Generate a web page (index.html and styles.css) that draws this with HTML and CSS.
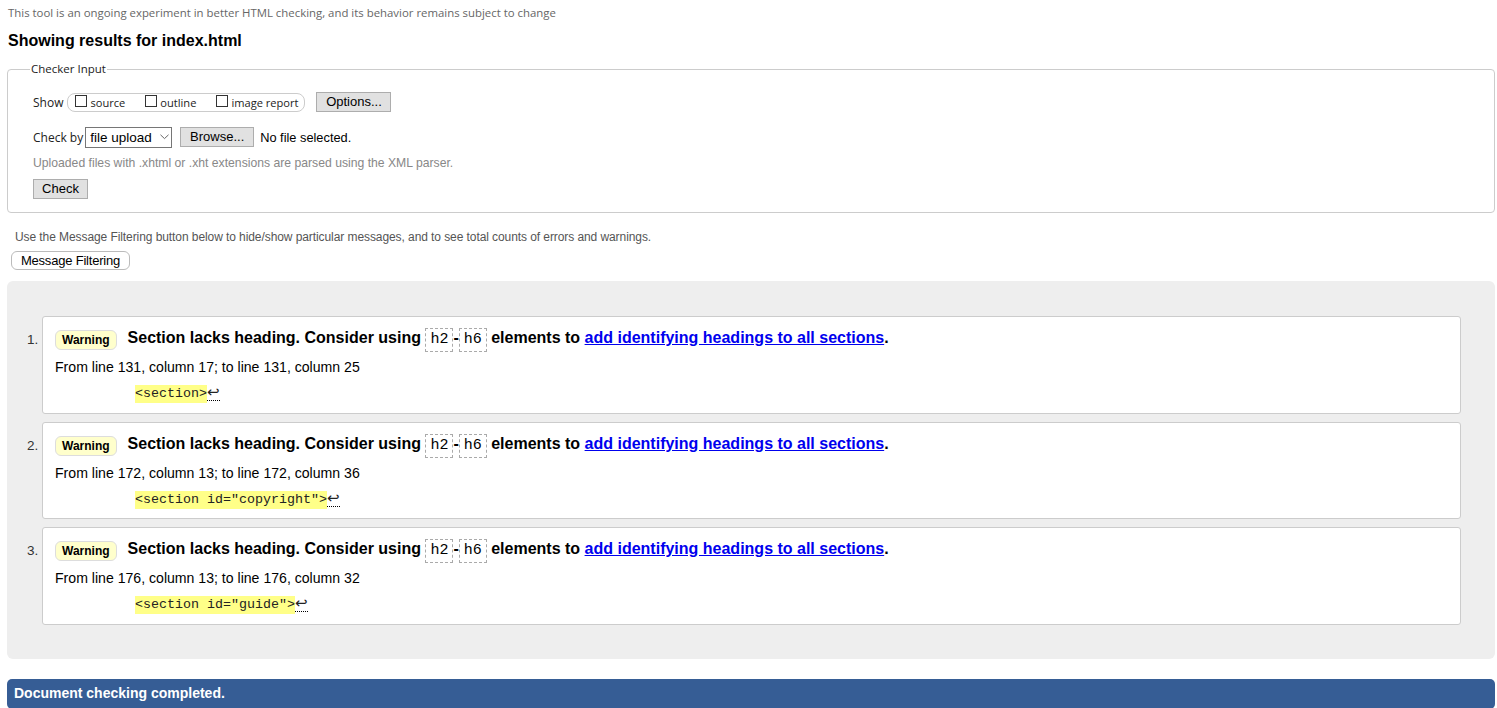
FILE: index.html
```html
<!DOCTYPE html>
<html lang="en">
<head>
<meta charset="utf-8">
<title>Showing results for index.html</title>
<link rel="stylesheet" href="styles.css">
</head>
<body>
<p class="disclaimer">This tool is an ongoing experiment in better HTML checking, and its behavior remains subject to change</p>
<h2 class="results-title">Showing results for index.html</h2>
<form class="checker-form">
  <fieldset class="checker">
    <legend>Checker Input</legend>
    <div class="row">
      <span class="label">Show</span>
      <span class="show-box">
        <label class="opt"><span class="cb"></span>source</label>
        <label class="opt"><span class="cb"></span>outline</label>
        <label class="opt"><span class="cb"></span>image report</label>
      </span>
      <button type="button" class="btn btn-options">Options...</button>
    </div>
    <div class="row row-check">
      <span class="label">Check by</span>
      <span class="select">file upload<svg class="chev" width="9" height="6" viewBox="0 0 9 6"><path d="M0.5 0.8 L4.5 4.6 L8.5 0.8" fill="none" stroke="#666" stroke-width="1"/></svg></span>
      <button type="button" class="btn btn-browse">Browse...</button>
      <span class="nofile">No file selected.</span>
    </div>
    <p class="hint">Uploaded files with .xhtml or .xht extensions are parsed using the XML parser.</p>
    <button type="button" class="btn btn-check">Check</button>
  </fieldset>
</form>
<p class="filter-note">Use the Message Filtering button below to hide/show particular messages, and to see total counts of errors and warnings.</p>
<button type="button" class="filter-btn">Message Filtering</button>
<div class="results">
  <ol class="messages">
    <li class="msg">
      <p class="msg-title"><span class="badge">Warning</span><span class="msg-text">Section lacks heading. Consider using <code class="tag">h2</code>-<code class="tag">h6</code> elements to <a href="#">add identifying headings to all sections</a>.</span></p>
      <p class="location">From line 131, column 17; to line 131, column 25</p>
      <p class="extract"><code><b class="hl">&lt;section&gt;</b><span class="lf">↩</span></code></p>
    </li>
    <li class="msg msg-short">
      <p class="msg-title"><span class="badge">Warning</span><span class="msg-text">Section lacks heading. Consider using <code class="tag">h2</code>-<code class="tag">h6</code> elements to <a href="#">add identifying headings to all sections</a>.</span></p>
      <p class="location">From line 172, column 13; to line 172, column 36</p>
      <p class="extract"><code><b class="hl">&lt;section id="copyright"&gt;</b><span class="lf">↩</span></code></p>
    </li>
    <li class="msg">
      <p class="msg-title"><span class="badge">Warning</span><span class="msg-text">Section lacks heading. Consider using <code class="tag">h2</code>-<code class="tag">h6</code> elements to <a href="#">add identifying headings to all sections</a>.</span></p>
      <p class="location">From line 176, column 13; to line 176, column 32</p>
      <p class="extract"><code><b class="hl">&lt;section id="guide"&gt;</b><span class="lf">↩</span></code></p>
    </li>
  </ol>
</div>
<p class="completed">Document checking completed.</p>
</body>
</html>
```

FILE: styles.css
```css
html, body {
  margin: 0;
  padding: 0;
  background: #fff;
}
body {
  padding: 0 2px 0 7px;
  font-family: "Liberation Sans", Arial, sans-serif;
  color: #000;
  overflow: hidden;
}
.disclaimer {
  margin: 0;
  padding: 5px 0 0 1px;
  font-family: "Open Sans", "Noto Sans", sans-serif;
  font-size: 11.4px;
  line-height: 15px;
  color: #666;
}
.results-title {
  margin: 0;
  padding: 11px 0 0 1px;
  font-size: 16px;
  line-height: 19px;
  font-weight: bold;
}
.checker-form {
  margin: 0;
  padding-top: 12px;
}
.checker {
  margin: 0;
  padding: 16px 25px 13px 25px;
  border: 1px solid #ccc;
  border-radius: 4px;
  min-width: 0;
}
.checker legend {
  padding: 0 1px;
  margin-left: -3px;
  font-family: "Open Sans", "Noto Sans", sans-serif;
  font-size: 11.5px;
  line-height: 14px;
  color: #222;
}
.row {
  display: flex;
  align-items: center;
  height: 20px;
  font-size: 12px;
}
.row-check {
  margin-top: 15px;
}
.label {
  font-family: "Open Sans", "Noto Sans", sans-serif;
  font-size: 12px;
  color: #222;
  margin-right: 2px;
}
.label-show {
  margin-right: 3px;
}
.show-box {
  display: inline-flex;
  align-items: center;
  box-sizing: border-box;
  height: 19px;
  margin-left: 2px;
  padding: 0 6px 0 7px;
  border: 1px solid #ccc;
  border-radius: 8px;
}
.opt {
  display: inline-flex;
  align-items: center;
  font-family: "Open Sans", "Noto Sans", sans-serif;
  font-size: 11.1px;
  color: #222;
}
.opt + .opt {
  margin-left: 20px;
}
.cb {
  display: inline-block;
  width: 10px;
  height: 10px;
  border: 1px solid #333;
  margin-right: 3px;
  margin-top: -3px;
}
.btn {
  font-family: "Liberation Sans", Arial, sans-serif;
  font-size: 13px;
  color: #000;
  background: #e1e1e1;
  border: 1px solid #adadad;
  border-radius: 0;
  height: 20px;
  padding: 0;
  margin: 0;
  line-height: 18px;
}
.btn-options {
  margin-left: 11px;
  width: 75px;
}
.select {
  display: inline-flex;
  align-items: center;
  box-sizing: border-box;
  height: 21px;
  width: 87px;
  border: 1px solid #767676;
  padding: 0 0 0 4px;
  font-size: 13.5px;
  background: #fff;
}
.chev {
  margin-left: 8px;
}
.btn-browse {
  margin-left: 8px;
  width: 74px;
}
.nofile {
  margin-left: 6px;
  font-size: 12.8px;
}
.hint {
  margin: 8px 0 0;
  font-size: 12.2px;
  line-height: 16px;
  color: #888;
}
.btn-check {
  margin-top: 8px;
  width: 55px;
}
.filter-note {
  margin: 0;
  padding: 17px 0 0 8px;
  font-family: "Liberation Sans", Arial, sans-serif;
  font-size: 12px;
  line-height: 15px;
  color: #555;
  letter-spacing: -0.08px;
}
.filter-btn {
  display: block;
  margin: 6px 0 0 4px;
  box-sizing: border-box;
  width: 119px;
  height: 19px;
  padding: 0;
  font-family: "Liberation Sans", Arial, sans-serif;
  font-size: 13px;
  letter-spacing: -0.2px;
  background: #fff;
  border: 1px solid #bbb;
  border-radius: 6px;
  color: #000;
}
.results {
  margin-top: 11px;
  background: #eee;
  border-radius: 6px;
  padding: 35px 34px 34px 35px;
}
.messages {
  margin: 0;
  padding: 0;
  list-style: decimal;
  list-style-position: outside;
  font-size: 13px;
  color: #222;
}
.msg {
  box-sizing: border-box;
  background: #fff;
  border: 1px solid #ccc;
  border-radius: 3px;
  padding: 13px 12px 0 12px;
  height: 98px;
  margin: 0;
  font-size: 14px;
}
.msg.msg-short {
  height: 97px;
}
.msg + .msg {
  margin-top: 8px;
}
.msg::marker {
  font-size: 13.5px;
  color: #333;
}
.msg-title {
  display: flex;
  align-items: center;
  margin: 0;
  height: 20px;
}
.badge {
  display: inline-block;
  box-sizing: border-box;
  height: 20px;
  padding: 0 6px;
  background: #ffc;
  border: 1px solid #ddd;
  border-radius: 6px;
  font-size: 12px;
  font-weight: bold;
  line-height: 19px;
  color: #000;
  margin-right: 11px;
}
.msg-text {
  font-size: 16px;
  font-weight: bold;
  color: #000;
}
.tag {
  display: inline-block;
  font-family: "Liberation Mono", "Courier New", monospace;
  font-weight: normal;
  font-size: 15px;
  line-height: 20px;
  padding: 1px 4px;
  border: 1px dashed #aaa;
  color: #000;
}
.msg-text a {
  color: #00e;
  text-decoration: underline;
}
.location {
  margin: 8px 0 0;
  font-size: 14.1px;
  line-height: 18px;
  color: #000;
}
.extract {
  margin: 8px 0 0 80px;
  line-height: 16px;
}
.extract code {
  font-family: "Liberation Mono", "Courier New", monospace;
  font-size: 13.33px;
}
.hl {
  font-weight: normal;
  background: #ff8;
  padding: 1px 0 2px;
}
.lf {
  display: inline-block;
  font-family: "DejaVu Sans", sans-serif;
  font-size: 15px;
  line-height: 15px;
  border-bottom: 1px dotted #000;
  color: #222;
}
.completed {
  margin: 20px 0 0;
  background: #365d95;
  color: #fff;
  font-size: 14px;
  font-weight: bold;
  line-height: 29px;
  height: 30px;
  padding: 0 7px;
  border-radius: 5px;
}
```
